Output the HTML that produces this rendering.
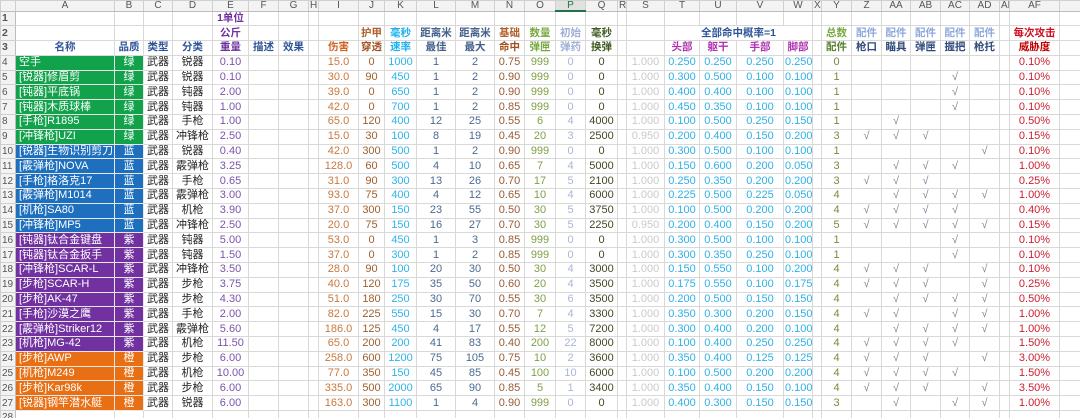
<!DOCTYPE html>
<html><head><meta charset="utf-8">
<style>
*{margin:0;padding:0;box-sizing:border-box}
html,body{width:1080px;height:418px;overflow:hidden;background:#fff}
table{border-collapse:collapse;table-layout:fixed;width:1080px;font-family:"Liberation Sans","Noto Sans CJK SC",sans-serif;font-size:11px}
td{border:1px solid #d9d9d9;height:14.8px;padding:0 1px;text-align:center;white-space:nowrap;overflow:hidden;line-height:13px}
tr.h td{height:10px;font-size:10px;line-height:9px;color:#555;background:#f3f3f3;border-color:#d0d0d0;border-bottom:1px solid #bcbcbc}
tr.h td.sel{background:#e1e1e1;border-bottom:2px solid #217346;color:#217346}
td.rn{background:#f3f3f3;color:#555;font-size:10px;text-align:left;padding-left:1px;border-color:#d0d0d0;border-right:1px solid #bcbcbc}
tr.t td{font-weight:bold;font-size:10.5px}
.g{background:#12a24b;color:#fff}
.b{background:#1e70bf;color:#fff}
.p{background:#7231a1;color:#fff}
.o{background:#e96f14;color:#fff}
td.nm{text-align:left;padding-left:3px;font-size:11px;border-color:#e8e8e8}
td.q{border-color:#e8e8e8}
tr.d td:nth-child(4),tr.d td:nth-child(5){color:#222}
tr.d td:nth-child(6){color:#7a54ad}
tr.d td:nth-child(10){color:#c8783e}
tr.d td:nth-child(11){color:#a0602e}
tr.d td:nth-child(12){color:#2eb4ec}
tr.d td:nth-child(13),tr.d td:nth-child(14){color:#4a6a92}
tr.d td:nth-child(15){color:#9a5a34}
tr.d td:nth-child(16){color:#7ea044}
tr.d td:nth-child(17){color:#a8b6d8}
tr.d td:nth-child(18){color:#3e4a22}
tr.d td:nth-child(20){color:#cacaca}
tr.d td:nth-child(21),tr.d td:nth-child(22),tr.d td:nth-child(23),tr.d td:nth-child(24){color:#2eb0e8}
tr.d td:nth-child(26){color:#7a8a3c}
tr.d td:nth-child(27),tr.d td:nth-child(28),tr.d td:nth-child(29),tr.d td:nth-child(30),tr.d td:nth-child(31){color:#7a8496}
tr.d td:nth-child(33){color:#cc2030}
</style></head><body>
<table>
<colgroup>
<col style="width:15px"><col style="width:99px"><col style="width:29px"><col style="width:29px"><col style="width:40px"><col style="width:36px"><col style="width:30px"><col style="width:30px"><col style="width:10px"><col style="width:40px"><col style="width:26px"><col style="width:32px"><col style="width:39px"><col style="width:39px"><col style="width:30px"><col style="width:31px"><col style="width:30px"><col style="width:32px"><col style="width:9px"><col style="width:38px"><col style="width:35px"><col style="width:37px"><col style="width:47px"><col style="width:29px"><col style="width:9px"><col style="width:30px"><col style="width:30px"><col style="width:29px"><col style="width:30px"><col style="width:29px"><col style="width:30px"><col style="width:10px"><col style="width:50px"><col style="width:21px">
</colgroup>
<tr class="h"><td></td><td>A</td><td>B</td><td>C</td><td>D</td><td>E</td><td>F</td><td>G</td><td>H</td><td>I</td><td>J</td><td>K</td><td>L</td><td>M</td><td>N</td><td>O</td><td class="sel">P</td><td>Q</td><td>R</td><td>S</td><td>T</td><td>U</td><td>V</td><td>W</td><td>X</td><td>Y</td><td>Z</td><td>AA</td><td>AB</td><td>AC</td><td>AD</td><td>AE</td><td>AF</td><td></td></tr>
<tr class="t"><td class="rn">1</td><td></td><td></td><td></td><td></td><td style="color:#7030a0">1单位</td><td></td><td></td><td></td><td></td><td></td><td></td><td></td><td></td><td></td><td></td><td></td><td></td><td></td><td></td><td></td><td></td><td></td><td></td><td></td><td></td><td></td><td></td><td></td><td></td><td></td><td></td><td></td><td></td></tr>
<tr class="t"><td class="rn">2</td><td></td><td></td><td></td><td></td><td style="color:#7030a0">公斤</td><td></td><td></td><td></td><td></td><td style="color:#b0602a">护甲</td><td style="color:#1cb0f0">毫秒</td><td style="color:#44608a">距离米</td><td style="color:#44608a">距离米</td><td style="color:#b0602a">基础</td><td style="color:#78a840">数量</td><td style="color:#9eaed8">初始</td><td style="color:#3e5a22">毫秒</td><td></td><td></td><td colspan="4" style="color:#2f5597">全部命中概率=1</td><td></td><td style="color:#78a840">总数</td><td style="color:#8ea8dc">配件</td><td style="color:#8ea8dc">配件</td><td style="color:#8ea8dc">配件</td><td style="color:#8ea8dc">配件</td><td style="color:#8ea8dc">配件</td><td></td><td style="color:#d01020">每次攻击</td><td></td></tr>
<tr class="t"><td class="rn">3</td><td style="color:#2f5597">名称</td><td style="color:#2f5597">品质</td><td style="color:#2f5597">类型</td><td style="color:#2f5597">分类</td><td style="color:#7030a0">重量</td><td style="color:#2f5597">描述</td><td style="color:#2f5597">效果</td><td></td><td style="color:#d06020">伤害</td><td style="color:#a0501e">穿透</td><td style="color:#1cb0f0">速率</td><td style="color:#44608a">最佳</td><td style="color:#44608a">最大</td><td style="color:#a0501e">命中</td><td style="color:#78a840">弹匣</td><td style="color:#9eaed8">弹药</td><td style="color:#3e5a22">换弹</td><td></td><td></td><td style="color:#b030b0">头部</td><td style="color:#b030b0">躯干</td><td style="color:#b030b0">手部</td><td style="color:#b030b0">脚部</td><td></td><td style="color:#5a8030">配件</td><td style="color:#2f4a7a">枪口</td><td style="color:#2f4a7a">瞄具</td><td style="color:#2f4a7a">弹匣</td><td style="color:#2f4a7a">握把</td><td style="color:#2f4a7a">枪托</td><td></td><td style="color:#c00000">威胁度</td><td></td></tr>
<tr class="d"><td class="rn">4</td><td class="nm g">空手</td><td class="q g">绿</td><td>武器</td><td>锐器</td><td>0.10</td><td></td><td></td><td></td><td>15.0</td><td>0</td><td>1000</td><td>1</td><td>2</td><td>0.75</td><td>999</td><td>0</td><td>0</td><td></td><td>1.000</td><td>0.250</td><td>0.250</td><td>0.250</td><td>0.250</td><td></td><td>0</td><td></td><td></td><td></td><td></td><td></td><td></td><td>0.10%</td><td></td></tr>
<tr class="d"><td class="rn">5</td><td class="nm g">[锐器]修眉剪</td><td class="q g">绿</td><td>武器</td><td>锐器</td><td>0.10</td><td></td><td></td><td></td><td>30.0</td><td>90</td><td>450</td><td>1</td><td>2</td><td>0.90</td><td>999</td><td>0</td><td>0</td><td></td><td>1.000</td><td>0.300</td><td>0.500</td><td>0.100</td><td>0.100</td><td></td><td>1</td><td></td><td></td><td></td><td>√</td><td></td><td></td><td>0.10%</td><td></td></tr>
<tr class="d"><td class="rn">6</td><td class="nm g">[钝器]平底锅</td><td class="q g">绿</td><td>武器</td><td>钝器</td><td>2.00</td><td></td><td></td><td></td><td>39.0</td><td>0</td><td>650</td><td>1</td><td>2</td><td>0.90</td><td>999</td><td>0</td><td>0</td><td></td><td>1.000</td><td>0.400</td><td>0.400</td><td>0.100</td><td>0.100</td><td></td><td>1</td><td></td><td></td><td></td><td>√</td><td></td><td></td><td>0.10%</td><td></td></tr>
<tr class="d"><td class="rn">7</td><td class="nm g">[钝器]木质球棒</td><td class="q g">绿</td><td>武器</td><td>钝器</td><td>1.00</td><td></td><td></td><td></td><td>42.0</td><td>0</td><td>700</td><td>1</td><td>2</td><td>0.85</td><td>999</td><td>0</td><td>0</td><td></td><td>1.000</td><td>0.450</td><td>0.350</td><td>0.100</td><td>0.100</td><td></td><td>1</td><td></td><td></td><td></td><td>√</td><td></td><td></td><td>0.10%</td><td></td></tr>
<tr class="d"><td class="rn">8</td><td class="nm g">[手枪]R1895</td><td class="q g">绿</td><td>武器</td><td>手枪</td><td>1.00</td><td></td><td></td><td></td><td>65.0</td><td>120</td><td>400</td><td>12</td><td>25</td><td>0.55</td><td>6</td><td>4</td><td>4000</td><td></td><td>1.000</td><td>0.100</td><td>0.500</td><td>0.250</td><td>0.150</td><td></td><td>1</td><td></td><td>√</td><td></td><td></td><td></td><td></td><td>0.50%</td><td></td></tr>
<tr class="d"><td class="rn">9</td><td class="nm g">[冲锋枪]UZI</td><td class="q g">绿</td><td>武器</td><td>冲锋枪</td><td>2.50</td><td></td><td></td><td></td><td>15.0</td><td>30</td><td>100</td><td>8</td><td>19</td><td>0.45</td><td>20</td><td>3</td><td>2500</td><td></td><td>0.950</td><td>0.200</td><td>0.400</td><td>0.150</td><td>0.200</td><td></td><td>3</td><td>√</td><td>√</td><td>√</td><td></td><td></td><td></td><td>0.15%</td><td></td></tr>
<tr class="d"><td class="rn">10</td><td class="nm b">[锐器]生物识别剪刀</td><td class="q b">蓝</td><td>武器</td><td>锐器</td><td>0.40</td><td></td><td></td><td></td><td>42.0</td><td>300</td><td>500</td><td>1</td><td>2</td><td>0.90</td><td>999</td><td>0</td><td>0</td><td></td><td>1.000</td><td>0.300</td><td>0.500</td><td>0.100</td><td>0.100</td><td></td><td>1</td><td></td><td></td><td></td><td></td><td>√</td><td></td><td>0.10%</td><td></td></tr>
<tr class="d"><td class="rn">11</td><td class="nm b">[霰弹枪]NOVA</td><td class="q b">蓝</td><td>武器</td><td>霰弹枪</td><td>3.25</td><td></td><td></td><td></td><td>128.0</td><td>60</td><td>500</td><td>4</td><td>10</td><td>0.65</td><td>7</td><td>4</td><td>5000</td><td></td><td>1.000</td><td>0.150</td><td>0.600</td><td>0.200</td><td>0.050</td><td></td><td>3</td><td></td><td>√</td><td>√</td><td>√</td><td></td><td></td><td>1.00%</td><td></td></tr>
<tr class="d"><td class="rn">12</td><td class="nm b">[手枪]格洛克17</td><td class="q b">蓝</td><td>武器</td><td>手枪</td><td>0.65</td><td></td><td></td><td></td><td>31.0</td><td>90</td><td>300</td><td>13</td><td>26</td><td>0.70</td><td>17</td><td>5</td><td>2100</td><td></td><td>1.000</td><td>0.250</td><td>0.350</td><td>0.200</td><td>0.200</td><td></td><td>3</td><td>√</td><td>√</td><td>√</td><td></td><td></td><td></td><td>0.25%</td><td></td></tr>
<tr class="d"><td class="rn">13</td><td class="nm b">[霰弹枪]M1014</td><td class="q b">蓝</td><td>武器</td><td>霰弹枪</td><td>3.00</td><td></td><td></td><td></td><td>93.0</td><td>75</td><td>400</td><td>4</td><td>12</td><td>0.65</td><td>10</td><td>4</td><td>6000</td><td></td><td>1.000</td><td>0.225</td><td>0.500</td><td>0.225</td><td>0.050</td><td></td><td>4</td><td></td><td>√</td><td>√</td><td>√</td><td>√</td><td></td><td>1.00%</td><td></td></tr>
<tr class="d"><td class="rn">14</td><td class="nm b">[机枪]SA80</td><td class="q b">蓝</td><td>武器</td><td>机枪</td><td>3.90</td><td></td><td></td><td></td><td>37.0</td><td>300</td><td>150</td><td>23</td><td>55</td><td>0.50</td><td>30</td><td>5</td><td>3750</td><td></td><td>1.000</td><td>0.100</td><td>0.500</td><td>0.200</td><td>0.200</td><td></td><td>4</td><td>√</td><td>√</td><td>√</td><td>√</td><td></td><td></td><td>0.40%</td><td></td></tr>
<tr class="d"><td class="rn">15</td><td class="nm b">[冲锋枪]MP5</td><td class="q b">蓝</td><td>武器</td><td>冲锋枪</td><td>2.50</td><td></td><td></td><td></td><td>20.0</td><td>75</td><td>150</td><td>16</td><td>27</td><td>0.70</td><td>30</td><td>5</td><td>2250</td><td></td><td>0.950</td><td>0.200</td><td>0.400</td><td>0.150</td><td>0.200</td><td></td><td>5</td><td>√</td><td>√</td><td>√</td><td>√</td><td>√</td><td></td><td>0.15%</td><td></td></tr>
<tr class="d"><td class="rn">16</td><td class="nm p">[钝器]钛合金键盘</td><td class="q p">紫</td><td>武器</td><td>钝器</td><td>5.00</td><td></td><td></td><td></td><td>53.0</td><td>0</td><td>450</td><td>1</td><td>3</td><td>0.85</td><td>999</td><td>0</td><td>0</td><td></td><td>1.000</td><td>0.300</td><td>0.500</td><td>0.100</td><td>0.100</td><td></td><td>1</td><td></td><td></td><td></td><td>√</td><td></td><td></td><td>0.10%</td><td></td></tr>
<tr class="d"><td class="rn">17</td><td class="nm p">[钝器]钛合金扳手</td><td class="q p">紫</td><td>武器</td><td>钝器</td><td>1.50</td><td></td><td></td><td></td><td>37.0</td><td>0</td><td>300</td><td>1</td><td>2</td><td>0.85</td><td>999</td><td>0</td><td>0</td><td></td><td>1.000</td><td>0.300</td><td>0.350</td><td>0.250</td><td>0.100</td><td></td><td>1</td><td></td><td></td><td></td><td>√</td><td></td><td></td><td>0.10%</td><td></td></tr>
<tr class="d"><td class="rn">18</td><td class="nm p">[冲锋枪]SCAR-L</td><td class="q p">紫</td><td>武器</td><td>冲锋枪</td><td>3.50</td><td></td><td></td><td></td><td>28.0</td><td>90</td><td>100</td><td>20</td><td>30</td><td>0.50</td><td>30</td><td>4</td><td>3000</td><td></td><td>1.000</td><td>0.150</td><td>0.550</td><td>0.100</td><td>0.200</td><td></td><td>4</td><td>√</td><td>√</td><td>√</td><td></td><td>√</td><td></td><td>0.10%</td><td></td></tr>
<tr class="d"><td class="rn">19</td><td class="nm p">[步枪]SCAR-H</td><td class="q p">紫</td><td>武器</td><td>步枪</td><td>3.75</td><td></td><td></td><td></td><td>40.0</td><td>120</td><td>175</td><td>35</td><td>50</td><td>0.60</td><td>20</td><td>4</td><td>3500</td><td></td><td>1.000</td><td>0.175</td><td>0.550</td><td>0.100</td><td>0.175</td><td></td><td>4</td><td>√</td><td>√</td><td>√</td><td></td><td>√</td><td></td><td>0.25%</td><td></td></tr>
<tr class="d"><td class="rn">20</td><td class="nm p">[步枪]AK-47</td><td class="q p">紫</td><td>武器</td><td>步枪</td><td>4.30</td><td></td><td></td><td></td><td>51.0</td><td>180</td><td>250</td><td>30</td><td>70</td><td>0.55</td><td>30</td><td>6</td><td>3500</td><td></td><td>1.000</td><td>0.200</td><td>0.500</td><td>0.150</td><td>0.150</td><td></td><td>4</td><td></td><td>√</td><td>√</td><td>√</td><td>√</td><td></td><td>0.50%</td><td></td></tr>
<tr class="d"><td class="rn">21</td><td class="nm p">[手枪]沙漠之鹰</td><td class="q p">紫</td><td>武器</td><td>手枪</td><td>2.00</td><td></td><td></td><td></td><td>82.0</td><td>225</td><td>550</td><td>15</td><td>30</td><td>0.70</td><td>7</td><td>4</td><td>3300</td><td></td><td>1.000</td><td>0.350</td><td>0.300</td><td>0.200</td><td>0.150</td><td></td><td>4</td><td>√</td><td>√</td><td></td><td>√</td><td>√</td><td></td><td>1.00%</td><td></td></tr>
<tr class="d"><td class="rn">22</td><td class="nm p">[霰弹枪]Striker12</td><td class="q p">紫</td><td>武器</td><td>霰弹枪</td><td>5.60</td><td></td><td></td><td></td><td>186.0</td><td>125</td><td>450</td><td>4</td><td>17</td><td>0.55</td><td>12</td><td>5</td><td>7200</td><td></td><td>1.000</td><td>0.300</td><td>0.400</td><td>0.200</td><td>0.100</td><td></td><td>4</td><td></td><td>√</td><td>√</td><td>√</td><td>√</td><td></td><td>1.00%</td><td></td></tr>
<tr class="d"><td class="rn">23</td><td class="nm p">[机枪]MG-42</td><td class="q p">紫</td><td>武器</td><td>机枪</td><td>11.50</td><td></td><td></td><td></td><td>65.0</td><td>200</td><td>200</td><td>41</td><td>83</td><td>0.40</td><td>200</td><td>22</td><td>8000</td><td></td><td>1.000</td><td>0.100</td><td>0.400</td><td>0.250</td><td>0.250</td><td></td><td>4</td><td>√</td><td>√</td><td>√</td><td>√</td><td></td><td></td><td>1.50%</td><td></td></tr>
<tr class="d"><td class="rn">24</td><td class="nm o">[步枪]AWP</td><td class="q o">橙</td><td>武器</td><td>步枪</td><td>6.00</td><td></td><td></td><td></td><td>258.0</td><td>600</td><td>1200</td><td>75</td><td>105</td><td>0.75</td><td>10</td><td>2</td><td>3600</td><td></td><td>1.000</td><td>0.350</td><td>0.400</td><td>0.125</td><td>0.125</td><td></td><td>4</td><td>√</td><td>√</td><td>√</td><td></td><td>√</td><td></td><td>3.00%</td><td></td></tr>
<tr class="d"><td class="rn">25</td><td class="nm o">[机枪]M249</td><td class="q o">橙</td><td>武器</td><td>机枪</td><td>10.00</td><td></td><td></td><td></td><td>77.0</td><td>350</td><td>150</td><td>45</td><td>85</td><td>0.45</td><td>100</td><td>10</td><td>6000</td><td></td><td>1.000</td><td>0.100</td><td>0.500</td><td>0.200</td><td>0.200</td><td></td><td>4</td><td>√</td><td>√</td><td>√</td><td>√</td><td></td><td></td><td>1.50%</td><td></td></tr>
<tr class="d"><td class="rn">26</td><td class="nm o">[步枪]Kar98k</td><td class="q o">橙</td><td>武器</td><td>步枪</td><td>6.00</td><td></td><td></td><td></td><td>335.0</td><td>500</td><td>2000</td><td>65</td><td>90</td><td>0.85</td><td>5</td><td>1</td><td>3400</td><td></td><td>1.000</td><td>0.350</td><td>0.400</td><td>0.150</td><td>0.100</td><td></td><td>4</td><td>√</td><td>√</td><td>√</td><td></td><td>√</td><td></td><td>3.50%</td><td></td></tr>
<tr class="d"><td class="rn">27</td><td class="nm o">[锐器]钢竿潜水艇</td><td class="q o">橙</td><td>武器</td><td>锐器</td><td>6.00</td><td></td><td></td><td></td><td>163.0</td><td>300</td><td>1100</td><td>1</td><td>4</td><td>0.90</td><td>999</td><td>0</td><td>0</td><td></td><td>1.000</td><td>0.400</td><td>0.300</td><td>0.150</td><td>0.150</td><td></td><td>3</td><td></td><td>√</td><td></td><td>√</td><td>√</td><td></td><td>1.00%</td><td></td></tr>
<tr class="d"><td class="rn">28</td><td></td><td></td><td></td><td></td><td></td><td></td><td></td><td></td><td></td><td></td><td></td><td></td><td></td><td></td><td></td><td></td><td></td><td></td><td></td><td></td><td></td><td></td><td></td><td></td><td></td><td></td><td></td><td></td><td></td><td></td><td></td><td></td><td></td></tr>
</table>
</body></html>
